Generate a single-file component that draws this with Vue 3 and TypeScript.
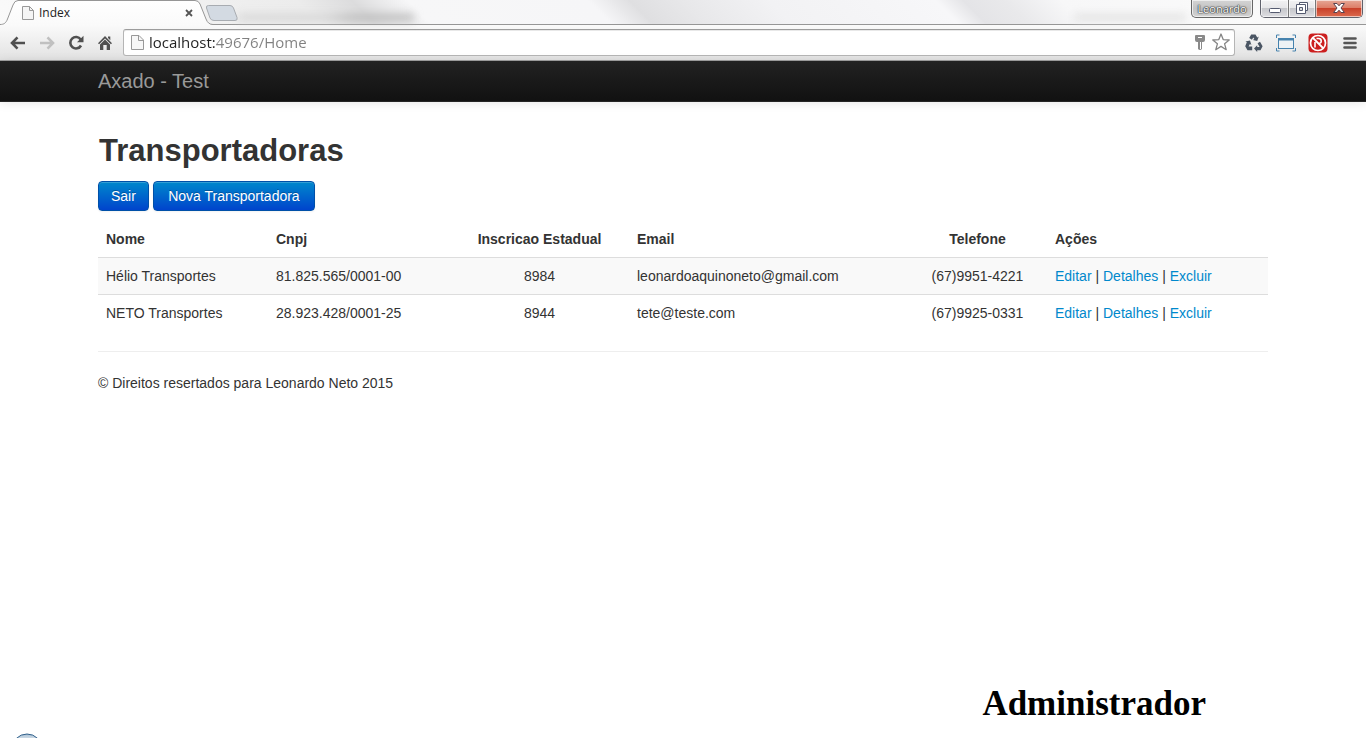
<script setup lang="ts">
import { ref } from 'vue'

interface Carrier {
  name: string
  cnpj: string
  stateId: string
  email: string
  phone: string
}

const address = ref('localhost:49676/Home')
const actions: string[] = ['Editar', 'Detalhes', 'Excluir']
const carriers: Carrier[] = [
  { name: 'Hélio Transportes', cnpj: '81.825.565/0001-00', stateId: '8984', email: 'leonardoaquinoneto@gmail.com', phone: '(67)9951-4221' },
  { name: 'NETO Transportes', cnpj: '28.923.428/0001-25', stateId: '8944', email: 'tete@teste.com', phone: '(67)9925-0331' },
]
</script>

<template>
  <div class="window">
    <header class="chrome">
      <div class="strip">
        <span class="smudge smudge-left"></span>
        <span class="smudge smudge-right"></span>
        <div class="tab">
          <svg class="tab-shape" width="216" height="25" viewBox="0 0 216 25" aria-hidden="true">
            <defs>
              <linearGradient id="tabFill" x1="0" y1="0" x2="0" y2="1">
                <stop offset="0" stop-color="#ffffff" />
                <stop offset="1" stop-color="#fafafa" />
              </linearGradient>
            </defs>
            <path d="M0 25V24C4 24 6 23 7.500 19L13 5Q14.500 .5 18 .5H195Q198.500 .5 200 4L206 19Q208 24.500 213 24.500V25Z" fill="url(#tabFill)" />
            <path d="M0 24.500C4 24.500 6 23 7.500 19L13 5Q14.500 .5 18 .5H195Q198.500 .5 200 4L206 19Q208 24.500 213 24.500H216" fill="none" stroke="#969696" />
          </svg>
          <svg class="tab-icon" width="12" height="14" viewBox="0 0 12 14" aria-hidden="true">
            <path d="M.5.5H7.500L11.500 4.500V13.500H.5Z" fill="#f5f5f5" stroke="#999" />
            <path d="M7.500.5V4.500H11.500" fill="none" stroke="#999" />
          </svg>
          <span class="tab-title">Index</span>
          <button class="tab-close" type="button" aria-label="Fechar guia">
            <svg width="8" height="8" viewBox="0 0 8 8"><path d="M1 1L7 7M7 1L1 7" stroke="#555" stroke-width="1.800" /></svg>
          </button>
        </div>
        <button class="new-tab" type="button" aria-label="Nova guia">
          <svg width="34" height="18" viewBox="0 0 34 18">
            <path d="M3.500 1.500H25Q27.500 1.500 28.500 4L32 13.500Q33 16.500 30 16.500H9Q6 16.500 5 14L1.500 4Q.8 1.500 3.500 1.500Z" fill="#d3dae2" stroke="#a8acb1" />
          </svg>
        </button>
        <div class="window-tools">
          <button class="profile" type="button">Leonardo</button>
          <div class="window-buttons">
            <button class="win minimize" type="button" aria-label="Minimizar">
              <svg width="12" height="6" viewBox="0 0 12 6"><rect x=".5" y=".5" width="11" height="4" rx="1" fill="#fff" stroke="#555b70" /></svg>
            </button>
            <button class="win maximize" type="button" aria-label="Restaurar">
              <svg width="12" height="12" viewBox="0 0 12 12">
                <path d="M3.500.5H11.500V8.500H3.500Z" fill="#fff" stroke="#555b70" />
                <path d="M.5 2.500H9.500V11.500H.5Z" fill="#fff" stroke="#555b70" />
                <path d="M3.500 5.500H6.500V8.500H3.500Z" fill="#ddd" stroke="#555b70" />
              </svg>
            </button>
            <button class="win close" type="button" aria-label="Fechar">
              <svg width="12" height="10" viewBox="0 0 12 10">
                <path d="M.6.5H4L6 2.800 8 .5H11.400L8 5 11.400 9.500H8L6 7.200 4 9.500H.6L4 5Z" fill="#fff" stroke="#5a4450" />
              </svg>
            </button>
          </div>
        </div>
      </div>

      <nav class="toolbar" aria-label="Navegador">
        <button class="tool nav" type="button" aria-label="Voltar">
          <svg width="16" height="14" viewBox="0 0 16 14"><path d="M15 7H2.500M7.500 1.300L2 7L7.500 12.700" fill="none" stroke="#505050" stroke-width="2.600" /></svg>
        </button>
        <button class="tool nav" type="button" aria-label="Avançar">
          <svg width="16" height="14" viewBox="0 0 16 14"><path d="M1 7H13.500M8.500 1.300L14 7L8.500 12.700" fill="none" stroke="#c0c0c0" stroke-width="2.600" /></svg>
        </button>
        <button class="tool nav" type="button" aria-label="Recarregar">
          <svg width="16" height="16" viewBox="0 0 16 16">
            <path d="M12.700 4.500A5.700 5.700 0 1 0 13 10.500" fill="none" stroke="#505050" stroke-width="2.600" />
            <path d="M15.500 .8V7.300H9Z" fill="#505050" />
          </svg>
        </button>
        <button class="tool nav" type="button" aria-label="Início">
          <svg width="16" height="16" viewBox="0 0 16 16">
            <path d="M8 1L15 8.200 13.900 9.300 8 3.500 2.100 9.300 1 8.200ZM11 1.500H13.300V5.300L11 3Z" fill="#505050" />
            <path d="M8 4.600L13 9.500V15H9.700V10H6.300V15H3V9.500Z" fill="#505050" />
          </svg>
        </button>
        <div class="omnibox">
          <svg width="13" height="15" viewBox="0 0 13 15" aria-hidden="true">
            <path d="M.5.5H8L12.500 5V14.500H.5Z" fill="#f7f7f7" stroke="#999" />
            <path d="M7.500.5V5.500H12.500" fill="none" stroke="#999" />
          </svg>
          <input v-model="address" class="address" type="text" aria-label="Endereço" spellcheck="false" />
          <button class="inside key" type="button" aria-label="Senhas salvas">
            <svg width="10" height="15" viewBox="0 0 10 15">
              <path d="M1 0H9Q10 0 10 1V5Q10 7 8 7H7V14Q5 16 3 14V7H2Q0 7 0 5V1Q0 0 1 0Z" fill="#8a8a8a" />
              <path d="M3 2H7V3H3ZM5 7H6V14H5Z" fill="#fff" />
            </svg>
          </button>
          <button class="inside" type="button" aria-label="Favoritar">
            <svg width="18" height="18" viewBox="0 0 18 18"><path d="M9 1L11.200 6.600 17.200 7 12.600 10.800 14.200 16.700 9 13.400 3.800 16.700 5.400 10.800.8 7 6.800 6.600Z" fill="#fff" stroke="#858585" stroke-width="1.300" stroke-linejoin="round" /></svg>
          </button>
        </div>
        <div class="extensions">
          <button class="tool" type="button" aria-label="Reciclar">
            <svg width="18" height="18" viewBox="0 0 18 18" fill="#4a5563">
              <path d="M6.200.5H10.500L12.300 3.400 13.800 2.600 12.200 7 7.900 6 9.300 5.100 8.300 3.400 6.900 5.700 4.200 4Z" />
              <path d="M15 7.800L17.600 12.200 15.500 16.200H12.200V17.900L9 14.500 12.200 11.300V13.100H14.600L12.600 9.300Z" />
              <path d="M1.800 8.200L.5 7.500 5 6.500 6.400 11 4.900 10.100 3.600 12.500H7.200V16.200H2.500L.2 12.200Z" />
            </svg>
          </button>
          <button class="tool" type="button" aria-label="Capturar página">
            <svg width="20" height="18" viewBox="0 0 20 18" fill="none" stroke="#4682ad">
              <path d="M.5 4V1H3.500M16.500 1H19.500V4M19.500 14V17H16.500M3.500 17H.5V14" />
              <rect x="2.500" y="4.500" width="15" height="10" fill="#edf2f5" />
              <path d="M3 5.500H17" stroke-width="2" />
            </svg>
          </button>
          <button class="tool" type="button" aria-label="Bloqueador">
            <svg width="20" height="20" viewBox="0 0 20 20">
              <rect x=".5" y=".5" width="19" height="19" rx="4" fill="#cc1f1f" />
              <circle cx="10" cy="10" r="7.500" fill="none" stroke="#fff" stroke-width="1.700" />
              <path d="M7 14.500V9M8.500 5.500H10.500Q13.200 5.500 13.200 8T11 10.200" fill="none" stroke="#fff" stroke-width="1.600" />
              <path d="M5 5L15 15" stroke="#fff" stroke-width="1.800" />
            </svg>
          </button>
          <button class="tool" type="button" aria-label="Menu">
            <svg width="14" height="14" viewBox="0 0 14 14"><path d="M1.500 2.500H12.500M1.500 7H12.500M1.500 11.500H12.500" stroke="#555" stroke-width="2.600" stroke-linecap="round" /></svg>
          </button>
        </div>
      </nav>
    </header>

    <div class="navbar">
      <div class="container"><a class="brand" href="#">Axado - Test</a></div>
    </div>

    <main class="container content">
      <h2>Transportadoras</h2>
      <div class="buttons">
        <button class="btn" type="button">Sair</button>
        <button class="btn btn-wide" type="button">Nova Transportadora</button>
      </div>
      <table>
        <colgroup>
          <col class="c-name" /><col class="c-cnpj" /><col class="c-state" /><col class="c-email" /><col class="c-phone" /><col />
        </colgroup>
        <thead>
          <tr>
            <th scope="col">Nome</th>
            <th scope="col">Cnpj</th>
            <th scope="col" class="center">Inscricao Estadual</th>
            <th scope="col">Email</th>
            <th scope="col" class="center">Telefone</th>
            <th scope="col">Ações</th>
          </tr>
        </thead>
        <tbody>
          <tr v-for="c in carriers" :key="c.cnpj">
            <td>{{ c.name }}</td>
            <td>{{ c.cnpj }}</td>
            <td class="center">{{ c.stateId }}</td>
            <td>{{ c.email }}</td>
            <td class="center">{{ c.phone }}</td>
            <td>
              <template v-for="(a, i) in actions" :key="a"><template v-if="i > 0"> | </template><a href="#">{{ a }}</a></template>
            </td>
          </tr>
        </tbody>
      </table>
      <hr />
      <footer>© Direitos resertados para Leonardo Neto 2015</footer>
    </main>

    <p class="role">Administrador</p>
    <svg class="orb" width="32" height="32" viewBox="0 0 32 32" aria-hidden="true">
      <defs>
        <linearGradient id="orbFill" x1="0" y1="0" x2="0" y2="1">
          <stop offset="0" stop-color="#a9c0d3" />
          <stop offset=".2" stop-color="#dce6ee" />
          <stop offset="1" stop-color="#6f9cbf" />
        </linearGradient>
      </defs>
      <circle cx="16" cy="16" r="15" fill="url(#orbFill)" stroke="#32618c" />
    </svg>
  </div>
</template>

<style>
body {
  margin: 0;
  background: #fff;
}
</style>

<style scoped>
.window {
  position: relative;
  display: flex;
  flex-direction: column;
  min-height: 100vh;
  overflow: hidden;
  font: 14px/20px "Liberation Sans", Arial, sans-serif;
  color: #333;
}
button {
  font: inherit;
  cursor: pointer;
}
svg {
  display: block;
  flex: none;
}
.chrome {
  font-family: "Open Sans", "Noto Sans", sans-serif;
}
.strip {
  position: relative;
  box-sizing: border-box;
  display: flex;
  height: 25px;
  border-bottom: 1px solid #969696;
  background: linear-gradient(45deg, #fafafa 0, #f0f0f0 16%, #ececec 23%, #dcdcdd 27%, #f7f7f8 31%, #f6f6f8 44%, #dfdfe1 47%, #e8e8ea 51%, #f2f2f4 57%, #f7f7f9 69%, #e4e4e7 71%, #e9e9eb 74%, #f7f7f8 78%, #fafafa 90%, #f0f0f0 100%);
}
.smudge {
  position: absolute;
  height: 7px;
  top: 14px;
  filter: blur(4px);
}
.smudge-left {
  left: 238px;
  width: 176px;
  background: linear-gradient(to right, #d6d6d6 50%, #bcbcbc 65%);
}
.smudge-right {
  left: 1074px;
  width: 112px;
  background: #e2e2e2;
}
.tab {
  position: relative;
  display: flex;
  align-items: center;
  box-sizing: border-box;
  width: 205px;
  height: 25px;
  padding: 0 11px 0 22px;
}
.tab-shape {
  position: absolute;
  left: 0;
  top: 0;
}
.tab-icon,
.tab-title,
.tab-close {
  position: relative;
}
.tab-title {
  flex: 1;
  margin-left: 5px;
  font-size: 12px;
  color: #222;
}
.tab-close,
.new-tab,
.tool,
.inside {
  display: flex;
  align-items: center;
  justify-content: center;
  border: 0;
  padding: 0;
  background: none;
}
.new-tab {
  position: relative;
  height: 25px;
}
.tab-close {
  width: 10px;
  height: 16px;
}
.window-tools {
  position: relative;
  display: flex;
  align-items: flex-start;
  gap: 7px;
  margin-left: auto;
  padding-right: 3px;
}
.profile {
  box-sizing: border-box;
  width: 62px;
  height: 18px;
  padding: 0;
  border: 1px solid #666;
  border-top: 0;
  border-radius: 0 0 5px 5px;
  background: linear-gradient(#d4d4d4, #c4c4c4 50%, #d2d2d2);
  box-shadow: inset 0 0 0 1px #eee;
  font-size: 11px;
  line-height: 16px;
  color: #fff;
  text-shadow: 0 0 1px #222, 0 0 1px #222, 0 0 2px #333;
}
.window-buttons {
  display: flex;
  box-sizing: border-box;
  height: 18px;
  border: 1px solid #60626c;
  border-top: 0;
  border-radius: 0 0 5px 5px;
  overflow: hidden;
}
.win {
  display: flex;
  align-items: center;
  justify-content: center;
  width: 27px;
  padding: 0;
  border: 0;
  border-right: 1px solid #777;
  background: linear-gradient(#f2f2f3, #e6e6e8 50%, #c6c7cb 50%, #dedee2);
  box-shadow: inset 0 0 0 1px rgba(255, 255, 255, .6);
}
.minimize {
  width: 28px;
  padding-top: 4px;
}
.close {
  width: 46px;
  padding-bottom: 2px;
  border-right: 0;
  background: linear-gradient(#e6a897, #dc7a63 50%, #c9412a 50%, #dc6a4e);
}
.maximize {
  padding-bottom: 2px;
}
.toolbar {
  box-sizing: border-box;
  display: flex;
  align-items: center;
  height: 36px;
  padding: 0 0 0 3px;
  border-bottom: 1px solid #a0a0a0;
  background: linear-gradient(#fafafa, #e2e2e2);
}
.tool {
  width: 32px;
  height: 28px;
}
.nav {
  width: 29px;
}
.omnibox {
  flex: 1;
  display: flex;
  align-items: center;
  box-sizing: border-box;
  height: 27px;
  margin: 0 3px 0 4px;
  padding: 0 3px 1px 7px;
  border: 1px solid #b5b5b5;
  border-top-color: #9c9c9c;
  border-radius: 3px;
  background: #fff;
  box-shadow: inset 0 1px 0 #e8e8e8;
}
.address {
  flex: 1;
  min-width: 0;
  height: 24px;
  margin-left: 5px;
  padding: 0 0 1px;
  box-sizing: border-box;
  border: 0;
  outline: 0;
  font: 15px/22px "Open Sans", "Noto Sans", sans-serif;
  color: #808080;
  background: linear-gradient(to right, #222 66px, #808080 66px);
  background-clip: text;
  -webkit-background-clip: text;
  -webkit-text-fill-color: transparent;
}
.inside {
  width: 20px;
  height: 24px;
}
.key {
  width: 22px;
}
.extensions {
  display: flex;
}
.navbar {
  box-sizing: border-box;
  height: 41px;
  border-bottom: 1px solid #252525;
  background: linear-gradient(#222, #111);
  box-shadow: 0 1px 10px rgba(0, 0, 0, .1);
}
.container {
  box-sizing: border-box;
  width: 100%;
  max-width: 1170px;
  margin: 0 auto;
}
.brand {
  display: inline-block;
  padding: 10px 0;
  font-size: 20px;
  color: #999;
}
a {
  color: #08c;
  text-decoration: none;
}
.content {
  padding-top: 19px;
}
h2 {
  margin: 10px 1px;
  font-size: 31px;
  line-height: 40px;
}
.buttons {
  display: flex;
  gap: 4px;
  margin-bottom: 10px;
}
.btn {
  padding: 4px 12px;
  border: 1px solid #0050a8;
  border-radius: 4px;
  background: linear-gradient(#08c, #04c);
  box-shadow: inset 0 1px 0 rgba(255, 255, 255, .2), 0 1px 2px rgba(0, 0, 0, .05);
  line-height: 20px;
  color: #fff;
  text-shadow: 0 -1px 0 rgba(0, 0, 0, .25);
}
.btn-wide {
  min-width: 162px;
}
table {
  width: 100%;
  table-layout: fixed;
  border-collapse: separate;
  border-spacing: 0;
}
.c-name {
  width: 170px;
}
.c-cnpj {
  width: 182px;
}
.c-state {
  width: 179px;
}
.c-email {
  width: 279px;
}
.c-phone {
  width: 139px;
}
th,
td {
  padding: 8px;
  text-align: left;
}
td {
  border-top: 1px solid #ddd;
}
tbody tr:nth-child(odd) td {
  background: #f9f9f9;
}
.center {
  text-align: center;
}
hr {
  margin: 20px 0;
  border: 0;
  border-top: 1px solid #eee;
  border-bottom: 1px solid #fff;
}
.role {
  margin: auto 160px 14px auto;
  font: bold 35px/40px "Liberation Serif", "Times New Roman", serif;
  color: #000;
}
.orb {
  position: absolute;
  left: 11px;
  bottom: -27px;
}
</style>
